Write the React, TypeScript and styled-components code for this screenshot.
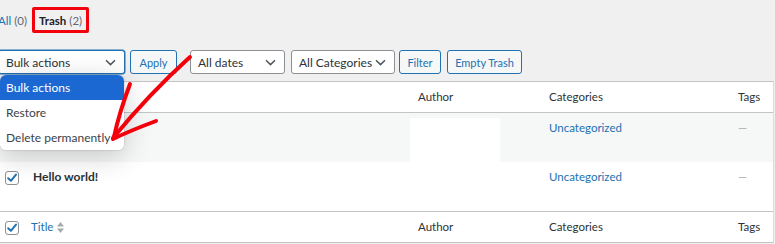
import React from "react";
import styled, { createGlobalStyle } from "styled-components";

const Global = createGlobalStyle`
  html, body { margin: 0; padding: 0; background: #f0f0f1; }
  body { font-family: "Lato", "Roboto", sans-serif; font-size: 11.5px; color: #2c3338; overflow: hidden; }
  #root { width: 775px; height: 244px; }
`;

const Page = styled.div`
  position: relative;
  width: 777px;
  margin-left: -2px;
  height: 244px;
  display: flex;
  flex-direction: column;
`;

const StatusBar = styled.ul`
  list-style: none;
  margin: 7px 0 0;
  padding: 0;
  display: flex;
  align-items: center;
  height: 26px;
  font-size: 11.5px;
`;

const StatusItem = styled.li<{ $boxed?: boolean }>`
  display: flex;
  align-items: center;
  white-space: nowrap;
  height: 20px;
  padding: 0 ${(p) => (p.$boxed ? "4px" : "0")};
  margin-left: ${(p) => (p.$boxed ? "5px" : "0")};
  border: ${(p) => (p.$boxed ? "3px solid #f2000b" : "none")};
  border-radius: 2px;
  color: ${(p) => (p.$boxed ? "#1d2327" : "#2271b1")};
  font-weight: ${(p) => (p.$boxed ? 700 : 400)};
`;

const Count = styled.span`
  color: #646970;
  font-weight: 400;
  margin-left: 3px;
`;

const Toolbar = styled.div`
  display: flex;
  align-items: center;
  margin-top: 17px;
  height: 24px;
`;

const SelectBox = styled.div<{ $w: number; $focus?: boolean; $ml?: number }>`
  width: ${(p) => p.$w}px;
  height: 24px;
  box-sizing: border-box;
  margin-left: ${(p) => p.$ml ?? 0}px;
  border: 1px solid ${(p) => (p.$focus ? "#2271b1" : "#8c8f94")};
  border-radius: 3px;
  background: #fff;
  display: flex;
  align-items: center;
  justify-content: space-between;
  padding: 0 8px 0 7px;
  color: #2c3338;
  font-size: 12px;
  white-space: nowrap;
  box-shadow: ${(p) => (p.$focus ? "0 0 0 0.5px #2271b1" : "none")};
`;

const Button = styled.div<{ $ml: number; $w: number }>`
  margin-left: ${(p) => p.$ml}px;
  width: ${(p) => p.$w}px;
  height: 24px;
  box-sizing: border-box;
  border: 1px solid #2271b1;
  border-radius: 3px;
  background: #f6f7f7;
  color: #2271b1;
  font-size: 11px;
  white-space: nowrap;
  display: flex;
  align-items: center;
  justify-content: center;
`;

const Chevron = () => (
  <svg width="11" height="7" viewBox="0 0 11 7">
    <path d="M1 1.2 L5.5 5.6 L10 1.2" fill="none" stroke="#50575e" strokeWidth="1.5" />
  </svg>
);

const Table = styled.div`
  margin-top: 7px;
  width: 776px;
  border: 1px solid #c3c4c7;
  border-right-color: #dcdcde;
  background: #fff;
  box-sizing: border-box;
`;

const Row = styled.div<{ $h: number; $alt?: boolean; $border?: boolean }>`
  display: grid;
  grid-template-columns: 29px 381px 131px 189px 1fr;
  height: ${(p) => p.$h}px;
  background: ${(p) => (p.$alt ? "#f6f7f7" : "#fff")};
  border-bottom: ${(p) => (p.$border ? "1px solid #c3c4c7" : "none")};
  box-sizing: border-box;
`;

const Cell = styled.div<{ $pt: number; $pl?: number; $color?: string; $bold?: boolean }>`
  padding-top: ${(p) => p.$pt}px;
  padding-left: ${(p) => p.$pl ?? 9}px;
  color: ${(p) => p.$color ?? "#2c3338"};
  font-weight: ${(p) => (p.$bold ? 700 : 400)};
  font-size: ${(p) => (p.$bold ? "12px" : "11.5px")};
  line-height: 18px;
  white-space: nowrap;
  display: flex;
  align-items: flex-start;
`;

const CheckCell = styled.div<{ $pt: number }>`
  padding-top: ${(p) => p.$pt}px;
  padding-left: 6px;
`;

const Redact = styled.div`
  margin-top: 5px;
  margin-left: 1px;
  width: 90px;
  height: 44px;
  background: #fff;
`;

const Dash = styled.span`
  color: #a7aaad;
`;

const Box = styled.span`
  display: block;
  width: 14px;
  height: 14px;
  box-sizing: border-box;
  border: 1px solid #8c8f94;
  border-radius: 3px;
  background: #fff;
  position: relative;
`;

const Check = () => (
  <Box>
    <svg width="14" height="14" viewBox="0 0 14 14" style={{ position: "absolute", left: -1, top: -1 }}>
      <path d="M3.2 7.2 L5.9 9.8 L11 3.6" fill="none" stroke="#2271b1" strokeWidth="2" strokeLinecap="round" strokeLinejoin="round" />
    </svg>
  </Box>
);

const SortIcon = () => (
  <svg width="7" height="11" viewBox="0 0 7 11" style={{ marginLeft: 4, marginTop: 4 }}>
    <path d="M3.5 0 L7 4.5 L0 4.5 Z" fill="#a7aaad" />
    <path d="M3.5 11 L7 6.5 L0 6.5 Z" fill="#a7aaad" />
  </svg>
);

const Dropdown = styled.div`
  position: absolute;
  left: 2px;
  top: 75px;
  width: 124px;
  background: #fff;
  border-radius: 6px;
  box-shadow: 0 6px 28px rgba(0, 0, 0, 0.2), 0 0 2px rgba(0, 0, 0, 0.25);
  overflow: hidden;
  z-index: 5;
`;

const Option = styled.div<{ $sel?: boolean }>`
  height: 25px;
  display: flex;
  align-items: center;
  padding-left: 6px;
  background: ${(p) => (p.$sel ? "#1c68d3" : "#fff")};
  color: ${(p) => (p.$sel ? "#fff" : "#3c434a")};
  font-size: 12px;
  white-space: nowrap;
`;

const ArrowSvg = styled.svg`
  position: absolute;
  left: 2px;
  top: 0;
  z-index: 6;
  pointer-events: none;
`;

export default function App() {
  return (
    <>
      <Global />
      <Page>
        <StatusBar>
          <StatusItem>
            All<Count>(0)</Count>
          </StatusItem>
          <StatusItem $boxed>
            Trash<Count>(2)</Count>
          </StatusItem>
        </StatusBar>
        <Toolbar>
          <SelectBox $w={127} $focus>
            Bulk actions <Chevron />
          </SelectBox>
          <Button $ml={5} $w={47}>Apply</Button>
          <SelectBox $w={95} $ml={13}>
            All dates <Chevron />
          </SelectBox>
          <SelectBox $w={104} $ml={6}>
            All Categories <Chevron />
          </SelectBox>
          <Button $ml={4} $w={42}>Filter</Button>
          <Button $ml={6} $w={75}>Empty Trash</Button>
        </Toolbar>
        <Table>
          <Row $h={31} $border>
            <CheckCell $pt={9} />
            <Cell $pt={6} $pl={3} />
            <Cell $pt={6}>Author</Cell>
            <Cell $pt={6}>Categories</Cell>
            <Cell $pt={6}>Tags</Cell>
          </Row>
          <Row $h={49} $alt>
            <CheckCell $pt={9} />
            <Cell $pt={6} $pl={3} />
            <Cell $pt={0} $pl={0}><Redact /></Cell>
            <Cell $pt={6} $color="#2271b1">Uncategorized</Cell>
            <Cell $pt={6}><Dash>—</Dash></Cell>
          </Row>
          <Row $h={50} $border>
            <CheckCell $pt={9}><Check /></CheckCell>
            <Cell $pt={6} $pl={5} $bold>Hello world!</Cell>
            <Cell $pt={6}></Cell>
            <Cell $pt={6} $color="#2271b1">Uncategorized</Cell>
            <Cell $pt={6}><Dash>—</Dash></Cell>
          </Row>
          <Row $h={30}>
            <CheckCell $pt={9}><Check /></CheckCell>
            <Cell $pt={6} $pl={3} $color="#2271b1">Title<SortIcon /></Cell>
            <Cell $pt={6}>Author</Cell>
            <Cell $pt={6}>Categories</Cell>
            <Cell $pt={6}>Tags</Cell>
          </Row>
        </Table>
        <Dropdown>
          <Option $sel>Bulk actions</Option>
          <Option>Restore</Option>
          <Option>Delete permanently</Option>
        </Dropdown>
        <ArrowSvg width="775" height="244" viewBox="0 0 775 244">
          <g fill="none" stroke="#f4000b" strokeWidth="4" strokeLinecap="round" strokeLinejoin="round">
            <path d="M190 57 C170 75 140 105 113 138" />
            <path d="M130 84 C124 100 118 118 114 137" />
            <path d="M156 121 C140 127 125 133 113 139" />
          </g>
        </ArrowSvg>
      </Page>
    </>
  );
}
